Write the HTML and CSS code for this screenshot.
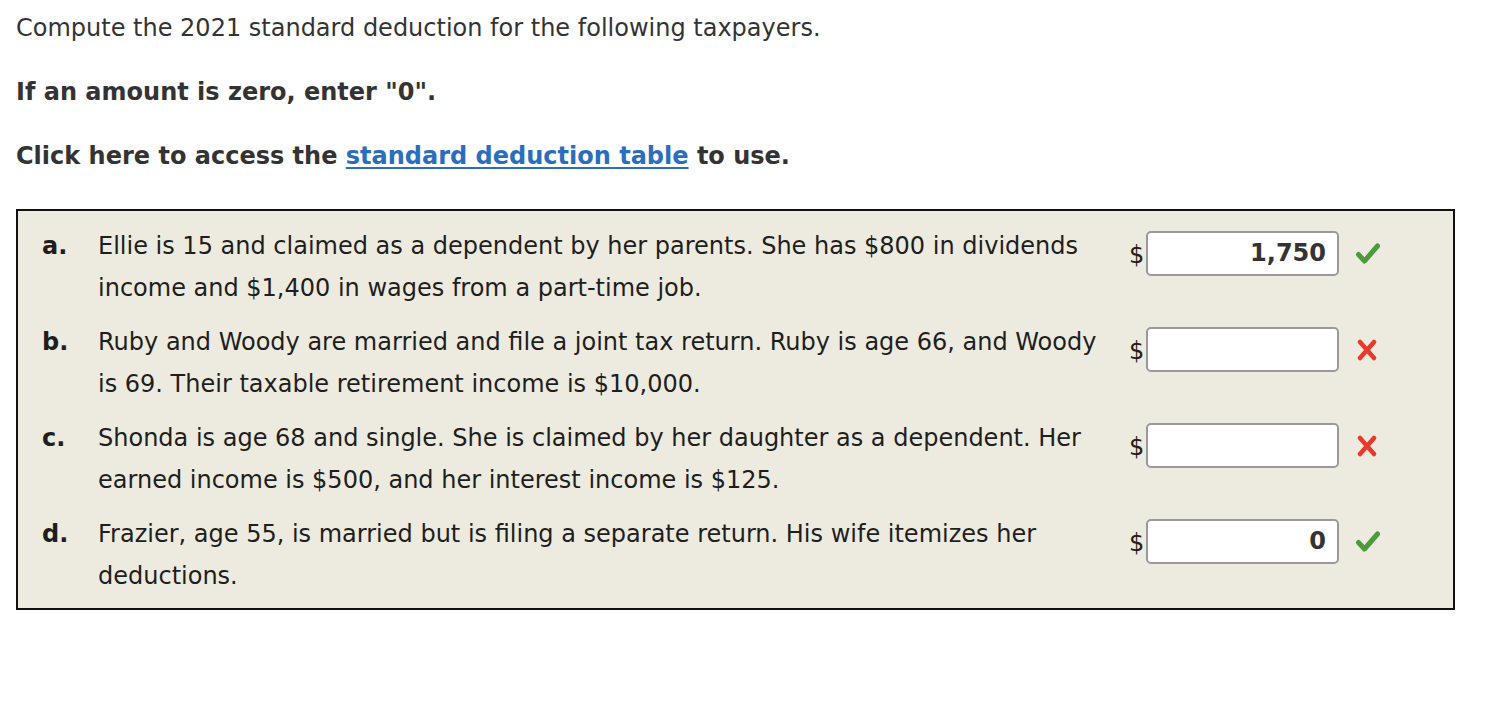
FILE: index.html
```html
<!DOCTYPE html>
<html>
<head>
<meta charset="utf-8">
<link rel="stylesheet" href="styles.css">
</head>
<body>
<div class="page">
  <p class="intro">Compute the 2021 standard deduction for the following taxpayers.</p>
  <p class="intro bold">If an amount is zero, enter "0".</p>
  <p class="intro bold">Click here to access the <a href="#" class="link">standard deduction table</a> to use.</p>

  <div class="box">
    <div class="row">
      <div class="label">a.</div>
      <div class="text">Ellie is 15 and claimed as a dependent by her parents. She has $800 in dividends income and $1,400 in wages from a part-time job.</div>
      <div class="answer">
        <span class="dollar">$</span>
        <div class="input">1,750</div>
        <span class="mark">
          <svg width="26" height="22" viewBox="0 0 26 22"><path d="M3.5 11.5 L9.5 18 L22.5 3" fill="none" stroke="#4c9a3c" stroke-width="5" stroke-linecap="round" stroke-linejoin="round"/></svg>
        </span>
      </div>
    </div>
    <div class="row">
      <div class="label">b.</div>
      <div class="text">Ruby and Woody are married and file a joint tax return. Ruby is age 66, and Woody is 69. Their taxable retirement income is $10,000.</div>
      <div class="answer">
        <span class="dollar">$</span>
        <div class="input"></div>
        <span class="mark">
          <svg width="26" height="22" viewBox="0 0 26 22"><path d="M5 3 L19 19 M19 3 L5 19" fill="none" stroke="#e8392b" stroke-width="4.5" stroke-linecap="round"/></svg>
        </span>
      </div>
    </div>
    <div class="row">
      <div class="label">c.</div>
      <div class="text">Shonda is age 68 and single. She is claimed by her daughter as a dependent. Her earned income is $500, and her interest income is $125.</div>
      <div class="answer">
        <span class="dollar">$</span>
        <div class="input"></div>
        <span class="mark">
          <svg width="26" height="22" viewBox="0 0 26 22"><path d="M5 3 L19 19 M19 3 L5 19" fill="none" stroke="#e8392b" stroke-width="4.5" stroke-linecap="round"/></svg>
        </span>
      </div>
    </div>
    <div class="row">
      <div class="label">d.</div>
      <div class="text">Frazier, age 55, is married but is filing a separate return. His wife itemizes her deductions.</div>
      <div class="answer">
        <span class="dollar">$</span>
        <div class="input">0</div>
        <span class="mark">
          <svg width="26" height="22" viewBox="0 0 26 22"><path d="M3.5 11.5 L9.5 18 L22.5 3" fill="none" stroke="#4c9a3c" stroke-width="5" stroke-linecap="round" stroke-linejoin="round"/></svg>
        </span>
      </div>
    </div>
  </div>
</div>
</body>
</html>
```

FILE: styles.css
```css
html, body {
  margin: 0;
  padding: 0;
  background: #ffffff;
}
body {
  font-family: "DejaVu Sans", Verdana, sans-serif;
  font-size: 24px;
  color: #333333;
}
.page {
  padding: 14px 16px 0 16px;
  width: 1439px;
}
.intro {
  margin: 0 0 35px 0;
  line-height: 29px;
}
.bold {
  font-weight: bold;
}
.link {
  color: #2a6ebd;
  text-decoration: underline;
  text-decoration-thickness: 2px;
  text-underline-offset: 3px;
}
.box {
  margin-top: 38px;
  border: 2px solid #111;
  background: #edebdf;
  padding: 14px 0 11px 0;
  color: #1e1e1e;
}
.row {
  display: flex;
  align-items: flex-start;
  margin-bottom: 12px;
}
.row:last-child {
  margin-bottom: 0;
}
.label {
  width: 56px;
  padding-left: 24px;
  font-weight: bold;
  line-height: 42px;
  flex: none;
}
.text {
  width: 1020px;
  line-height: 42px;
  flex: none;
}
.answer {
  display: flex;
  align-items: center;
  margin-left: 11px;
  height: 44px;
  margin-top: 6px;
}
.dollar {
  width: 17px;
  font-size: 24px;
  padding-top: 4px;
}
.input {
  box-sizing: border-box;
  width: 193px;
  height: 45px;
  background: #ffffff;
  border: 2px solid #9a9a9a;
  border-radius: 5px;
  text-align: right;
  padding-right: 11px;
  font-weight: bold;
  color: #333;
  line-height: 41px;
}
.mark {
  margin-left: 16px;
  display: flex;
  align-items: center;
  padding-top: 2px;
}
```
